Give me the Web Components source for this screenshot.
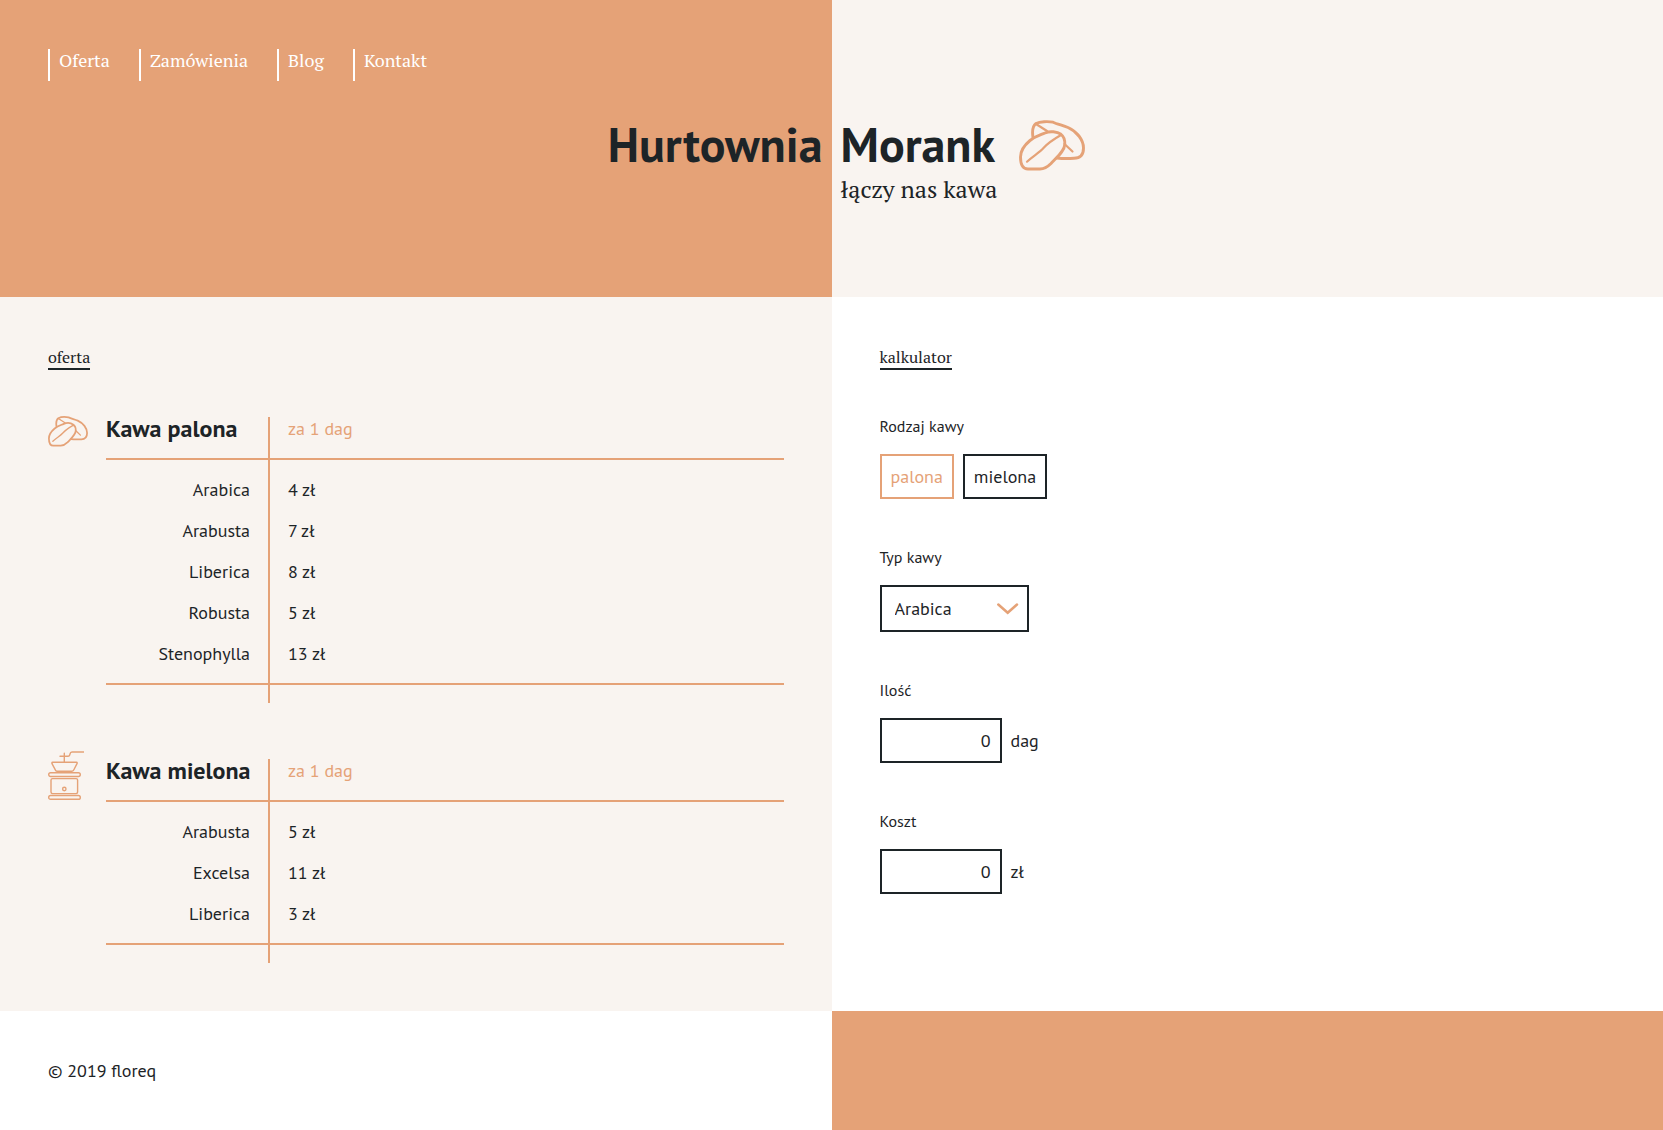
<!DOCTYPE html>
<html lang="pl">
<head>
<meta charset="utf-8">
<meta name="viewport" content="width=device-width, initial-scale=1">
<title>Hurtownia Morank</title>
<style>
  :root {
    --accent: #e5a277;
    --ink: #1d2427;
    --cream: #f9f4f0;
    --serif: "PT Serif", "Liberation Serif", serif;
    --sans: "PT Sans", Lato, sans-serif;
  }
  body { margin: 0; background: #fff; color: var(--ink); font: 18px/23px var(--sans); }
</style>
</head>
<body>
<morank-page></morank-page>

<template id="t-page">
  <style>
    :host { display: block; }
    main { display: grid; grid-template-columns: 1fr 1fr; }
  </style>
  <morank-header>
    <morank-nav slot="nav"></morank-nav>
  </morank-header>
  <main>
    <page-panel heading="oferta" tone="cream">
      <coffee-offer heading="Kawa palona" icon="beans" items="Arabica:4|Arabusta:7|Liberica:8|Robusta:5|Stenophylla:13"></coffee-offer>
      <coffee-offer heading="Kawa mielona" icon="grinder" items="Arabusta:5|Excelsa:11|Liberica:3"></coffee-offer>
    </page-panel>
    <page-panel heading="kalkulator">
      <coffee-calculator></coffee-calculator>
    </page-panel>
  </main>
  <morank-footer>© 2019 floreq</morank-footer>
</template>

<template id="t-nav">
  <style>
    :host { display: block; font: 18px/22px var(--serif); }
    nav { display: flex; flex-wrap: wrap; gap: 29px; }
    a { border-left: 2px solid #fff; padding: 0 0 10px 9px; color: #fff; text-decoration: none; }
  </style>
  <nav aria-label="Menu">
    <a href="#oferta">Oferta</a>
    <a href="#zamowienia">Zamówienia</a>
    <a href="#blog">Blog</a>
    <a href="#kontakt">Kontakt</a>
  </nav>
</template>

<template id="t-header">
  <style>
    :host { display: block; background: var(--cream); }
    header { display: grid; grid-template-columns: 1fr 1fr; }
    .nav { padding: 49px 48px 33px; background: var(--accent); }
    h1 { display: contents; font-size: 48px; line-height: 60px; font-weight: 700; }
    .left { grid-column: 1; grid-row: 2 / 4; text-align: right; padding-right: 9px; background: var(--accent); }
    .right { grid-column: 2; grid-row: 2; display: flex; align-items: center; gap: 24px; padding-left: 9px; }
    coffee-icon { padding-top: 2px; }
    p { grid-column: 2; grid-row: 3; margin: 0; padding: 0 0 92px 9px; font: 24px/31px var(--serif); }
  </style>
  <header>
    <div class="nav"><slot name="nav"></slot></div>
    <h1><span class="left">Hurtownia</span><span class="right">Morank <coffee-icon name="beans" size="66"></coffee-icon></span></h1>
    <p>łączy nas kawa</p>
  </header>
</template>

<template id="t-panel">
  <style>
    :host { display: block; padding: 48px; }
    :host([tone="cream"]) { background: var(--cream); }
    h2 { width: fit-content; margin: 0 0 46px; padding-top: 2px; font: 16px/21px var(--serif); border-bottom: 2px solid; }
    .content { display: grid; gap: 48px; }
  </style>
  <h2></h2>
  <div class="content"><slot></slot></div>
</template>

<template id="t-offer">
  <style>
    :host { display: grid; grid-template-columns: 58px 1fr; align-items: start; }
    table { width: 100%; margin-top: 1px; border-spacing: 0; table-layout: fixed; }
    :host([icon="grinder"]) table { margin-top: 8px; }
    col.name { width: 162px; }
    th, td { padding: 9px 0; font-weight: 400; }
    th:first-child { text-align: right; padding-right: 18px; }
    th + th, td { border-left: 2px solid var(--accent); padding-left: 18px; text-align: left; }
    thead th { height: 23px; padding-top: 0; padding-bottom: 18px; border-bottom: 2px solid var(--accent); vertical-align: top; }
    thead th:first-child { text-align: left; font-size: 24px; font-weight: 700; padding-right: 0; white-space: nowrap; }
    thead th + th { color: var(--accent); }
    tbody tr:first-child > * { padding-top: 18px; }
    tbody tr:last-child > * { padding-bottom: 18px; }
    tfoot td { height: 18px; padding: 0; border-top: 2px solid var(--accent); }
    tfoot td:first-child { border-left: 0; }
  </style>
  <coffee-icon></coffee-icon>
  <table>
    <colgroup><col class="name"><col></colgroup>
    <thead><tr><th scope="col" class="heading"></th><th scope="col">za 1 dag</th></tr></thead>
    <tbody></tbody>
    <tfoot><tr><td></td><td></td></tr></tfoot>
  </table>
</template>

<template id="t-calculator">
  <style>
    :host { display: block; }
    form { display: grid; gap: 48px; }
    .field { display: grid; gap: 18px; justify-items: start; }
    .label { font-size: 16px; line-height: 20px; }
    .row { display: flex; align-items: center; gap: 9px; }
    button, input, select {
      box-sizing: border-box; margin: 0; font: inherit; color: inherit;
      background: #fff; border: 2px solid var(--ink); border-radius: 0; appearance: none;
    }
    button { padding: 9px; cursor: pointer; }
    button[aria-pressed="true"] { color: var(--accent); border-color: var(--accent); }
    input { width: 122px; height: 45px; padding: 9px; text-align: right; }
    .select { position: relative; display: grid; }
    select { width: 149px; height: 47px; padding: 0 40px 0 13px; }
    .select svg { position: absolute; right: 10px; top: 18px; pointer-events: none; }
  </style>
  <form>
    <div class="field" role="group" aria-labelledby="kind">
      <span class="label" id="kind">Rodzaj kawy</span>
      <div class="row">
        <button type="button" aria-pressed="true">palona</button>
        <button type="button" aria-pressed="false">mielona</button>
      </div>
    </div>
    <div class="field">
      <label class="label" for="type">Typ kawy</label>
      <div class="select">
        <select id="type"><option>Arabica</option><option>Arabusta</option><option>Liberica</option><option>Robusta</option><option>Stenophylla</option></select>
        <svg width="22" height="12" viewBox="0 0 22 12" fill="none" stroke="#e5a277" stroke-width="2.5" stroke-linecap="round" aria-hidden="true"><path d="M1.3 1.5 10.700 9.800 20 1.500"/></svg>
      </div>
    </div>
    <div class="field">
      <label class="label" for="amount">Ilość</label>
      <div class="row"><input id="amount" type="text" inputmode="numeric" value="0"><span>dag</span></div>
    </div>
    <div class="field">
      <label class="label" for="cost">Koszt</label>
      <div class="row"><input id="cost" type="text" value="0" readonly><span>zł</span></div>
    </div>
  </form>
</template>

<template id="t-footer">
  <style>
    :host { display: block; }
    footer { display: grid; grid-template-columns: 1fr 1fr; }
    .text { padding: 48px; }
    .fill { background: var(--accent); }
  </style>
  <footer><div class="text"><slot></slot></div><div class="fill"></div></footer>
</template>

<script>
  const stamp = (host, id) => {
    const root = host.attachShadow({ mode: 'open' });
    root.append(document.getElementById(id).content.cloneNode(true));
    return root;
  };

  const icons = {
    beans: { w: 66, h: 51, width: 40, stroke: 2.9, body: `
      <path d="M42 14.300C38 11.500 31 10.800 26 13C20 15.500 16 16.500 11 20.500C5 25.500 1.500 30 1.500 37C1.500 45 4 49 9 49L21 49C26 49 29 46.500 32 43.500C38 37 45.500 31 45.800 24.500C46 20 45 16.500 42 14.300Z"/>
      <path d="M42 15C35 19 29 23 24.500 28C20 33 14 36 8 41.700" stroke-width="2.2"/>
      <path d="M14 17.500C13 11 13.500 6 17 3.500C21 1.500 29 1.200 34 2.200C38 4 44 5.500 49 7.500C58 11.500 64.500 20 64.500 28C64.500 35 61 38.300 55 38.300C50 38.600 43 38.600 38 38"/>
      <path d="M17 4 28 11M45.500 24 53.500 31.500" stroke-width="2.2"/>` },
    grinder: { w: 36, h: 49, width: 36, stroke: 1.4, body: `
      <path d="M36 1H24C22.500 1 22.200 2 22 3C21.800 4.500 21.500 5.300 20 5.300H12M16.300 2.300V11"/>
      <path d="M4.500 11.300H28.500C29.300 11.300 29.300 12 29 12.600L26 18.500C25.600 19.500 25 20.200 24 20.200H9C8 20.200 7.500 19.500 7.200 18.700L4 12.600C3.800 12 3.800 11.300 4.500 11.300Z"/>
      <rect x=".7" y="21.700" width="31.600" height="3.800" rx="1.900"/>
      <rect x="3" y="27.600" width="26.600" height="15" rx="1.500"/>
      <circle cx="16.300" cy="38" r="1.700"/>
      <rect x=".7" y="44.500" width="31.600" height="3.800" rx="1.900"/>` }
  };

  customElements.define('coffee-icon', class extends HTMLElement {
    static observedAttributes = ['name'];
    connectedCallback() { this.render(); }
    attributeChangedCallback() { this.render(); }
    render() {
      const icon = icons[this.getAttribute('name')];
      if (!icon) return;
      const root = this.shadowRoot || this.attachShadow({ mode: 'open' });
      const width = this.getAttribute('size') || icon.width;
      root.innerHTML = `<style>:host{display:block;line-height:0}svg{fill:none;stroke:var(--accent);stroke-linecap:round;stroke-linejoin:round}</style>
        <svg width="${width}" height="${Math.round(width * icon.h / icon.w)}" viewBox="0 0 ${icon.w} ${icon.h}" stroke-width="${icon.stroke}" aria-hidden="true">${icon.body}</svg>`;
    }
  });

  customElements.define('morank-nav', class extends HTMLElement {
    constructor() { super(); stamp(this, 't-nav'); }
  });

  customElements.define('morank-header', class extends HTMLElement {
    constructor() { super(); stamp(this, 't-header'); }
  });

  customElements.define('page-panel', class extends HTMLElement {
    connectedCallback() {
      if (this.shadowRoot) return;
      stamp(this, 't-panel').querySelector('h2').textContent = this.getAttribute('heading');
    }
  });

  customElements.define('coffee-offer', class extends HTMLElement {
    connectedCallback() {
      if (this.shadowRoot) return;
      const root = stamp(this, 't-offer');
      root.querySelector('coffee-icon').setAttribute('name', this.getAttribute('icon'));
      root.querySelector('.heading').textContent = this.getAttribute('heading');
      root.querySelector('tbody').innerHTML = this.getAttribute('items').split('|').map(item => {
        const [name, price] = item.split(':');
        return `<tr><th scope="row">${name}</th><td>${price} zł</td></tr>`;
      }).join('');
    }
  });

  customElements.define('coffee-calculator', class extends HTMLElement {
    constructor() {
      super();
      const root = stamp(this, 't-calculator');
      const buttons = root.querySelectorAll('button');
      buttons.forEach(button => button.addEventListener('click', () =>
        buttons.forEach(other => other.setAttribute('aria-pressed', other === button))));
    }
  });

  customElements.define('morank-footer', class extends HTMLElement {
    constructor() { super(); stamp(this, 't-footer'); }
  });

  customElements.define('morank-page', class extends HTMLElement {
    constructor() { super(); stamp(this, 't-page'); }
  });
</script>
</body>
</html>
